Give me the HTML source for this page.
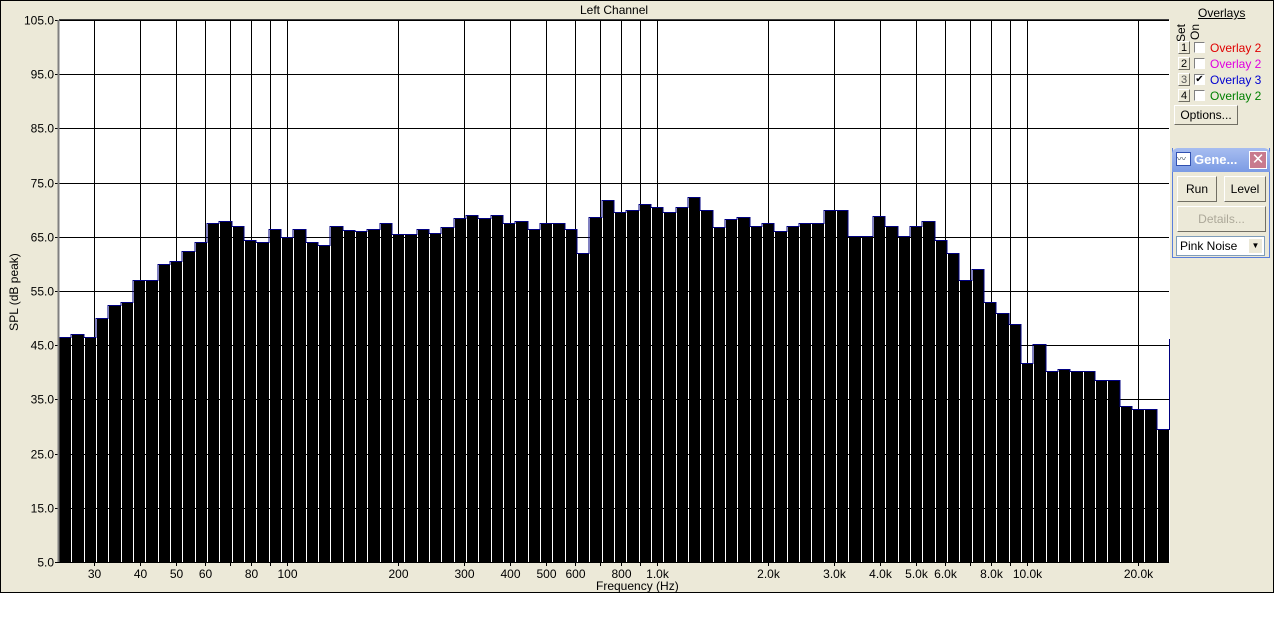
<!DOCTYPE html>
<html><head><meta charset="utf-8"><style>
body{margin:0;width:1274px;height:637px;background:#fff;overflow:hidden;font-family:"Liberation Sans",sans-serif;}
#win{position:absolute;left:0;top:0;width:1272px;height:591px;border:1px solid #000;background:#ece9d8;}
.t{position:absolute;font-size:12px;color:#000;white-space:nowrap;}
.btn{position:absolute;background:#ece9d8;border:1px solid;border-color:#fff #716f64 #716f64 #fff;font-size:12px;text-align:center;box-sizing:border-box;}
.cb{position:absolute;width:11px;height:11px;background:#fff;border:1px solid;border-color:#808080 #fff #fff #808080;box-sizing:border-box;}
.num{position:absolute;width:12px;height:13px;font-size:11px;text-align:center;line-height:13px;border:1px solid;border-color:#fff #716f64 #716f64 #fff;box-sizing:border-box;}
</style></head><body>
<div id="win"></div>
<svg id="plot" width="1274" height="637" style="position:absolute;left:0;top:0" font-family="Liberation Sans, sans-serif" font-size="12"></svg>
<div class="t" style="left:580px;top:3px">Left Channel</div>
<div class="t" style="left:596px;top:579px">Frequency (Hz)</div>
<div class="t" style="left:-34px;top:285px;transform:rotate(-90deg);width:96px;text-align:center">SPL (dB peak)</div>

<div class="t" style="left:1198px;top:6px;text-decoration:underline">Overlays</div>
<div class="t" style="left:1174px;top:20px;transform:rotate(-90deg);font-size:12px;width:22px;height:14px;transform-origin:11px 11px">Set</div>
<div class="t" style="left:1188px;top:20px;transform:rotate(-90deg);font-size:12px;width:20px;height:14px;transform-origin:10px 10px">On</div>
<div class="num" style="left:1178px;top:41px">1</div><div class="cb" style="left:1194px;top:42px"></div><div class="t" style="left:1210px;top:41px;color:#e00000">Overlay 2</div>
<div class="num" style="left:1178px;top:57px">2</div><div class="cb" style="left:1194px;top:58px"></div><div class="t" style="left:1210px;top:57px;color:#e000e0">Overlay 2</div>
<div class="num" style="left:1178px;top:73px;color:#555">3</div><div class="cb" style="left:1194px;top:74px;font-size:10px;line-height:9px;text-align:center">✔</div><div class="t" style="left:1210px;top:73px;color:#0000d0">Overlay 3</div>
<div class="num" style="left:1178px;top:89px">4</div><div class="cb" style="left:1194px;top:90px"></div><div class="t" style="left:1210px;top:89px;color:#008000">Overlay 2</div>
<div class="btn" style="left:1174px;top:105px;width:64px;height:20px;line-height:18px">Options...</div>

<div style="position:absolute;left:1172px;top:148px;width:98px;height:110px;background:#ece9d8;border:1px solid #5a7edc;box-sizing:border-box;border-top:none">
<div style="position:absolute;left:-1px;top:0;width:98px;height:24px;background:linear-gradient(#a7bdf0,#7b9be4);border-radius:6px 6px 0 0"></div>
<div style="position:absolute;left:3px;top:4px;width:15px;height:14px;background:#fff;border:1px solid #3050b0;box-sizing:border-box;font-size:9px;line-height:12px;color:#345">〰</div>
<div style="position:absolute;left:21px;top:4px;color:#fff;font-weight:bold;font-size:13px">Gene...</div>
<div style="position:absolute;left:76px;top:3px;width:18px;height:18px;background:#c87a8e;border:1px solid #fff;box-sizing:border-box;color:#fff;font-size:15px;line-height:16px;text-align:center">✕</div>
<div class="btn" style="left:4px;top:28px;width:40px;height:26px;line-height:24px">Run</div>
<div class="btn" style="left:51px;top:28px;width:42px;height:26px;line-height:24px">Level</div>
<div class="btn" style="left:4px;top:58px;width:89px;height:26px;line-height:24px;color:#aca899">Details...</div>
<div style="position:absolute;left:3px;top:88px;width:89px;height:20px;background:#fff;border:1px solid #7f9db9;box-sizing:border-box;font-size:12px;line-height:18px;padding-left:3px">Pink Noise<span style="position:absolute;right:2px;top:2px;width:13px;height:14px;background:#ece9d8;font-size:8px;line-height:14px;text-align:center">▼</span></div>
</div>

<script>
var s=document.getElementById('plot'),h='';
var L=59,R=1169,T=20,B=562;
function X(f){return 287+370*Math.log10(f/100);}
function Y(d){return T+(105-d)*(B-T)/100;}
h+='<rect x="'+L+'" y="'+T+'" width="'+(R-L+1)+'" height="'+(B-T)+'" fill="#fff"/>';
for(var d=5;d<=105;d+=10){var y=Math.round(Y(d))+0.5;h+='<line x1="'+L+'" x2="'+R+'" y1="'+y+'" y2="'+y+'" stroke="#000"/>';h+='<line x1="'+(L-4)+'" x2="'+L+'" y1="'+y+'" y2="'+y+'" stroke="#000"/>';h+='<text x="54" y="'+(y+4)+'" text-anchor="end">'+d.toFixed(1)+'</text>';}
var fs=[30,40,50,60,70,80,90,100,200,300,400,500,600,700,800,900,1000,2000,3000,4000,5000,6000,7000,8000,9000,10000,20000];
var lab={30:'30',40:'40',50:'50',60:'60',80:'80',100:'100',200:'200',300:'300',400:'400',500:'500',600:'600',800:'800',1000:'1.0k',2000:'2.0k',3000:'3.0k',4000:'4.0k',5000:'5.0k',6000:'6.0k',8000:'8.0k',10000:'10.0k',20000:'20.0k'};
fs.forEach(function(f){var x=Math.round(X(f))+0.5;h+='<line x1="'+x+'" x2="'+x+'" y1="'+T+'" y2="'+(B+4)+'" stroke="#000"/>';if(lab[f])h+='<text x="'+x+'" y="578" text-anchor="middle">'+lab[f]+'</text>';});
var v=[46.5,47,46.5,50,52.5,53,57,57,60,60.5,62.3,64,67.5,68,67,64.5,64,66.5,65,66.5,64,63.5,67,66.3,66,66.5,67.5,65.5,65.5,66.5,65.7,66.8,68.5,69,68.5,69,67.5,68,66.5,67.5,67.5,66.5,62,68.7,71.7,69.5,70,71,70.5,69.5,70.5,72.3,70,66.8,68.3,68.7,67,67.5,66,67,67.5,67.5,70,70,65.2,65.2,68.8,67,65.2,67,68,64.5,62,57,59,53,51,49,41.8,45.2,40.3,40.7,40.3,40.3,38.5,38.5,33.8,33.2,33.2,29.5];
var w=(R-L)/90,pts=[];
for(var i=0;i<90;i++){var x0=Math.round(L+i*w),x1=Math.round(L+(i+1)*w),y=Math.round(Y(v[i]));
h+='<rect x="'+(x0+(i?1:0))+'" y="'+y+'" width="'+(x1-x0-(i?1:0))+'" height="'+(B-y)+'" fill="#000"/>';
pts.push(x0+','+(y+0.5),x1+','+(y+0.5));}
pts.push(R+0.5+','+(y+0.5),R+0.5+',339');
h+='<polyline points="'+pts.join(' ')+'" fill="none" stroke="#000080" stroke-width="1"/>';
h+='<line x1="'+(L-0.5)+'" x2="'+(L-0.5)+'" y1="'+T+'" y2="'+B+'" stroke="#808080" stroke-width="2"/>';
h+='<line x1="'+L+'" x2="'+R+'" y1="'+(T-0.5)+'" y2="'+(T-0.5)+'" stroke="#404040"/>';
s.innerHTML=h;
</script>
</body></html>
